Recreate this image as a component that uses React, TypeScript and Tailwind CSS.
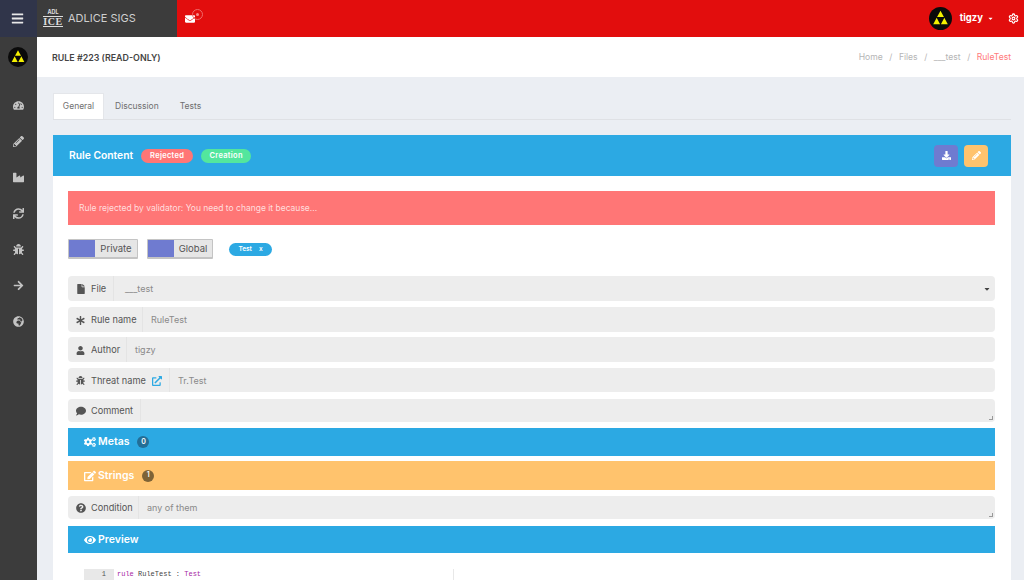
import { ReactNode } from "react";
import {
  FaBars, FaEnvelope, FaTachometerAlt, FaPencilAlt, FaIndustry, FaSync, FaBug, FaArrowRight,
  FaGlobeAfrica, FaFile, FaAsterisk, FaUser, FaExternalLinkAlt, FaComment, FaCogs, FaEdit,
  FaQuestionCircle, FaEye, FaDownload, FaCaretDown,
} from "react-icons/fa";
import { Settings } from "lucide-react";

function Triforce({ size }: { size: number }) {
  return (
    <svg width={size} height={size} viewBox="0 0 24 24">
      <circle cx="12" cy="12" r="12" fill="#0a0a0a" />
      <path d="M12 4l3.6 6.4H8.400zM8 11.200l3.600 6.800H4.400zM16 11.200l3.600 6.800h-7.200z" fill="#f4f000" />
    </svg>
  );
}

function Field({ icon, label, value, labelW, className, valuePad = "pl-2", resize }: { icon: ReactNode; label: ReactNode; value: string; labelW: string; className: string; valuePad?: string; resize?: boolean }) {
  return (
    <div className={`relative flex rounded-sm bg-[#ededed] ${className}`}>
      <div className={`flex shrink-0 items-center border-r border-[#e4e4e4] pl-2 pt-px text-[9.200px] text-[#555] ${labelW}`}>
        {icon}
        {label}
      </div>
      <div className={`flex items-center pt-px text-[9px] text-[#8a8a8a] ${valuePad}`}>{value}</div>
      {resize && <span className="absolute bottom-0.5 right-0.5 h-1 w-1 border-b border-r border-[#999]" />}
    </div>
  );
}

function Bar({ icon, title, count, color, badge, className }: { icon: ReactNode; title: string; count?: number; color: string; badge?: string; className: string }) {
  return (
    <div className={`flex items-center pl-4 text-[10.500px] font-semibold text-white ${color} ${className}`}>
      {icon}
      <span>{title}</span>
      {count !== undefined && <span className={`ml-2 flex h-3 w-3 items-center justify-center rounded-full text-[7px] ${badge}`}>{count}</span>}
    </div>
  );
}

function Toggle({ label, className }: { label: string; className: string }) {
  return (
    <div className={`flex h-5 overflow-hidden rounded-[1px] border border-b-2 border-[#c4c4c4] ${className}`}>
      <div className="w-[26px] bg-[#6f7bd0]" />
      <div className="flex flex-1 items-center justify-center bg-[#e6e6e6] pt-[2px] text-[9.500px] text-[#555]">{label}</div>
    </div>
  );
}

export default function App() {
  return (
    <div className="flex h-[580px] w-[1024px] flex-col overflow-hidden bg-[#ebeef3] font-['Inter','Liberation_Sans',sans-serif] text-[9px]">
      {/* Top bar */}
      <header className="flex h-[37px] shrink-0">
        <div className="flex w-[37px] items-center justify-center bg-[#30354a] pr-[3px] text-[13px] text-[#e8e8e8]"><FaBars /></div>
        <div className="flex w-[140px] items-center bg-[#3c3c3c] pl-[7px]">
          <div className="flex w-[18px] flex-col items-center leading-none text-[#ddd]">
            <span className="text-[5.500px] font-bold">ADL</span>
            <span className="mt-px border-y border-[#ddd] font-['Liberation_Serif',serif] text-[10px] font-bold leading-[9px] tracking-[0.5px]">ICE</span>
          </div>
          <span className="ml-[6px] text-[11px] text-[#cfcfcf]">ADLICE SIGS</span>
        </div>
        <div className="flex flex-1 items-center bg-[#e20d0d] pl-[8px] text-white">
          <div className="relative">
            <FaEnvelope className="text-[10px]" />
            <span className="absolute -right-2 -top-[5px] flex h-[11px] w-[11px] items-center justify-center rounded-full border border-[#f06a6a]">
              <span className="h-[3px] w-[3px] rounded-full bg-[#f58a8a]" />
            </span>
          </div>
          <div className="ml-auto flex items-center pr-[5px]">
            <Triforce size={23} />
            <span className="ml-2 text-[9.500px] font-bold">tigzy</span>
            <FaCaretDown className="ml-1 text-[7px]" />
            <Settings size={11} strokeWidth={2.5} className="ml-[14px]" />
          </div>
        </div>
      </header>

      <div className="flex min-h-0 flex-1">
        {/* Sidebar */}
        <aside className="flex w-[37px] shrink-0 flex-col items-center bg-[#3c3c3c] text-[11px] text-[#c4c4c4]">
          <div className="mr-[2px] mt-[10px]"><Triforce size={20} /></div>
          <div className="mr-px mt-[33px] flex flex-col items-center gap-[25px]">
            <FaTachometerAlt />
            <FaPencilAlt />
            <FaIndustry />
            <FaSync />
            <FaBug />
            <FaArrowRight />
            <FaGlobeAfrica />
          </div>
        </aside>

        <main className="flex min-w-0 flex-1 flex-col">
          {/* Title row */}
          <div className="flex h-10 shrink-0 items-center justify-between bg-white pl-[15px] pr-[13px] pt-px">
            <h1 className="text-[8.900px] font-semibold text-[#444]">RULE #223 (READ-ONLY)</h1>
            <div className="flex text-[8.600px] text-[#b5b5b5]">
              <span>Home</span><span className="mx-[6.500px]">/</span>
              <span>Files</span><span className="mx-[6.500px]">/</span>
              <span>___test</span><span className="mx-[6.500px]">/</span>
              <span className="text-[#ff7b7b]">RuleTest</span>
            </div>
          </div>

          <div className="flex min-h-0 flex-1 flex-col pl-4 pr-[13px] pt-4">
            {/* Tabs */}
            <nav className="flex h-[27px] shrink-0 border-b border-[#dfe1e5] text-[8.500px] text-[#6f6f6f]">
              <div className="flex w-[51px] items-center justify-center border border-b-0 border-[#e4e6ea] bg-white">General</div>
              <div className="ml-[11px] flex items-center">Discussion</div>
              <div className="ml-[21px] flex items-center">Tests</div>
            </nav>

            {/* Panel */}
            <section className="mt-[15px] flex min-h-0 flex-1 flex-col overflow-hidden bg-white">
              <div className="flex h-[41px] shrink-0 items-center bg-[#2ca9e3] pl-4 pr-[23px] text-white">
                <span className="text-[10.300px] font-semibold">Rule Content</span>
                <span className="ml-2 flex h-[14px] w-[52px] items-center justify-center rounded-full bg-[#ff7676] pt-px text-[7.500px] font-semibold tracking-[0.3px]">Rejected</span>
                <span className="ml-2 flex h-[14px] w-[50px] items-center justify-center rounded-full bg-[#53e69d] pt-px text-[7.500px] font-semibold tracking-[0.3px]">Creation</span>
                <div className="ml-auto flex gap-[6px]">
                  <button className="flex h-[22px] w-6 items-center justify-center rounded-sm bg-[#6f7bd0] text-[9px]"><FaDownload /></button>
                  <button className="flex h-[22px] w-6 items-center justify-center rounded-sm bg-[#ffc36d] text-[9px]"><FaPencilAlt /></button>
                </div>
              </div>

              <div className="flex flex-col pl-[15px] pr-4 pt-[15px]">
                <div className="flex h-[34px] items-center bg-[#ff7676] pl-[11px] pt-px text-[8.500px] text-[#ffdede]">Rule rejected by validator: You need to change it because...</div>

                <div className="mt-[14px] flex items-center">
                  <Toggle label="Private" className="w-[70px]" />
                  <Toggle label="Global" className="ml-[9px] w-[66px]" />
                  <span className="ml-4 flex h-[13px] w-[43px] items-center justify-center gap-[7px] rounded-full bg-[#2ca9e3] pt-px text-[6.500px] font-semibold text-white"><span>Test</span><span>x</span></span>
                </div>

                <div className="relative mt-[17px]">
                  <Field className="h-[25px]" labelW="w-[46px]" valuePad="pl-[11px]" icon={<FaFile className="mr-[5px] text-[10px]" />} label="File" value="___test" />
                  <FaCaretDown className="absolute right-1 top-[9px] text-[8px] text-[#444]" />
                </div>
                <Field className="mt-[6px] h-[25px]" labelW="w-[75px]" icon={<FaAsterisk className="mr-[6px] text-[9px]" />} label="Rule name" value="RuleTest" />
                <Field className="mt-[5px] h-[25px]" labelW="w-[59px]" icon={<FaUser className="mr-[6px] text-[9px]" />} label="Author" value="tigzy" />
                <Field className="mt-[6px] h-6" labelW="w-[102px]" icon={<FaBug className="mr-[6px] text-[9px]" />} label={<>Threat name<FaExternalLinkAlt className="ml-[6px] text-[10px] text-[#2ca9e3]" /></>} value="Tr.Test" />
                <Field className="mt-[7px] h-[23px]" labelW="w-[73px]" icon={<FaComment className="mr-[5px] text-[10px]" />} label="Comment" value="" resize />

                <Bar className="mt-[6px] h-7" color="bg-[#2ca9e3]" badge="bg-[#236e97]" icon={<FaCogs className="mr-[2px] text-[12px]" />} title="Metas" count={0} />
                <Bar className="mt-[5px] h-[29px]" color="bg-[#ffc36d]" badge="bg-[#7e6336]" icon={<FaEdit className="mr-[2px] text-[12px]" />} title="Strings" count={1} />
                <Field className="mt-[6px] h-[23px]" labelW="w-[71px]" icon={<FaQuestionCircle className="mr-[5px] text-[10px]" />} label="Condition" value="any of them" resize />
                <Bar className="mt-[7px] h-[27px]" color="bg-[#2ca9e3]" icon={<FaEye className="mr-[2px] text-[12px]" />} title="Preview" />

                {/* Code preview */}
                <div className="mt-4 flex h-10 font-['Liberation_Mono',monospace] text-[7px]">
                  <div className="ml-4 flex h-[11px] w-[30px] items-center justify-end bg-[#e8e8e8] pr-2 text-[#555]">1</div>
                  <div className="ml-[3px] h-[11px] w-[336px] leading-[11px]">
                    <span className="text-[#a626a4]">rule</span>
                    <span className="text-[#444]"> RuleTest : </span>
                    <span className="text-[#a626a4]">Test</span>
                  </div>
                  <div className="h-full w-px bg-[#e8e8e8]" />
                </div>
              </div>
            </section>
          </div>
        </main>
      </div>
    </div>
  );
}
